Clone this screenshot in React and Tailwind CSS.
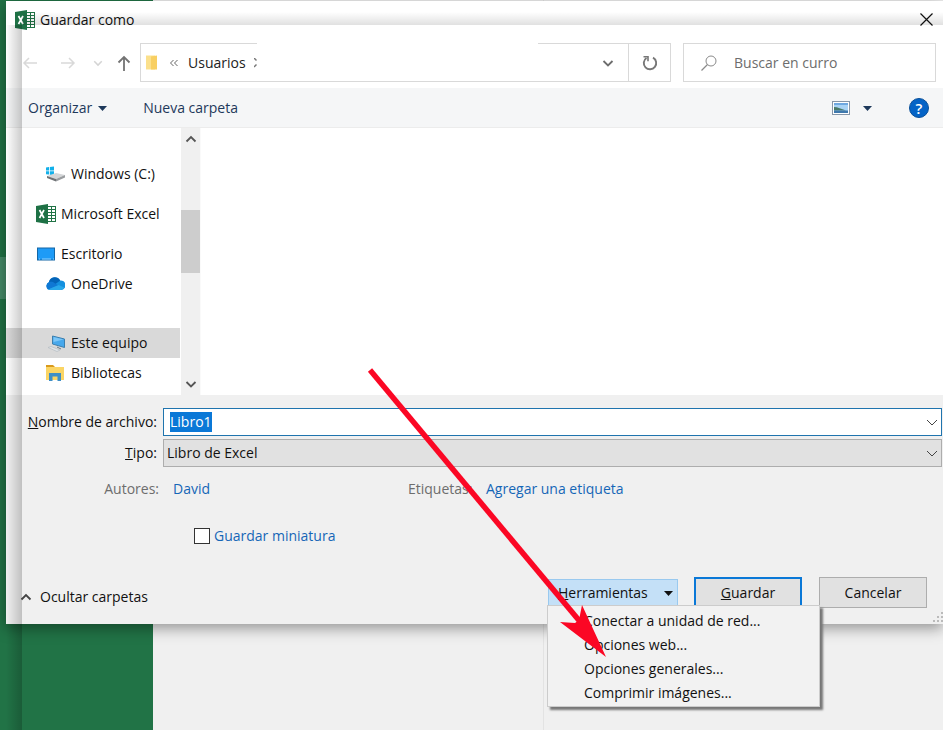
import React, { useEffect, useRef, useState } from "react";

const ExcelIcon = () => (
  <svg width="20" height="20" viewBox="0 0 20 20" className="shrink-0">
    <rect x="10" y="2.5" width="9.5" height="15" fill="#fff" stroke="#217346" />
    <path d="M10 5.5h9M10 8.5h9M10 11.5h9M10 14.5h9M15.500 3v14" stroke="#217346" />
    <path d="M0 2l12-2v20L0 18z" fill="#1e7145" />
    <path d="M3.500 6l4.500 8M8 6l-4.500 8" stroke="#fff" strokeWidth="1.700" />
  </svg>
);

const DriveIcon = () => (
  <svg width="20" height="20" viewBox="0 0 20 20" className="shrink-0">
    <path d="M1 3.500l3-.5v3.500H1zM4.800 2.900L9 2.500v4H4.800zM1 7.300h3v3.300l-3-.4zM4.800 7.300H9v4l-4.200-.5z" fill="#12b0ea" />
    <path d="M2 12l9-3 9 2-9 4z" fill="#d3d5d7" />
    <path d="M2 12l9 3v2.500L2 14z" fill="#6f7275" />
    <path d="M11 15l9-4v2.500l-9 4z" fill="#999c9f" />
  </svg>
);

const DesktopIcon = () => (
  <svg width="20" height="20" viewBox="0 0 20 20" className="shrink-0">
    <rect x="1.500" y="4" width="17" height="12" fill="#1e9bf7" stroke="#1467a6" />
    <path d="M3 15h1M6 15h9M17 15h1" stroke="#8fd0ff" />
  </svg>
);

const CloudIcon = () => (
  <svg width="20" height="20" viewBox="0 0 20 20" className="shrink-0">
    <path d="M4.500 16a4.300 4.300 0 0 1-.5-8 6 6 0 0 1 11-1.500 4.800 4.800 0 0 1 1.500 9.500z" fill="#1490df" />
    <path d="M4 8a6 6 0 0 1 11.200-1.500L9 11z" fill="#0364b8" />
    <path d="M4 8.200c2-1 4-.4 5.500.8l4 2.500L3 15.500A4.300 4.300 0 0 1 4 8.200z" fill="#0f78d4" />
    <path d="M3 15.500L13.500 11l6 2.500A4 4 0 0 1 16 16H4.500z" fill="#28a8ea" />
  </svg>
);

const ComputerIcon = () => (
  <svg width="20" height="20" viewBox="0 0 20 20" className="shrink-0">
    <path d="M7.500 3l12 3v8.500l-12-3.500z" fill="#47a8ec" stroke="#3c7fae" />
    <path d="M8.500 4l10 2.500-10 2.500z" fill="#7cc6f7" />
    <path d="M3 14.500l3-1 9 3.500-3 1.500z" fill="#dfe4e8" stroke="#b5bcc2" strokeWidth=".7" />
    <path d="M12 14l4 2" stroke="#6c7b85" />
  </svg>
);

const LibraryIcon = () => (
  <svg width="20" height="20" viewBox="0 0 20 20" className="shrink-0">
    <path d="M1 2h7l2 2h-9z" fill="#d99a1c" />
    <path d="M1 4h18v13H1z" fill="#fbd564" />
    <path d="M4 18v-8h12v8h-3.500v-4.500h-5V18z" fill="#3f8fc6" />
  </svg>
);

const Chevron = ({ up, size = 12, className = "" }) => (
  <svg width={size} height={size} viewBox="0 0 12 12" className={className}>
    <path d={up ? "M1.500 8.500L6 4l4.500 4.500" : "M1.500 4L6 8.500 10.500 4"} fill="none" stroke="currentColor" strokeWidth="1.800" />
  </svg>
);

const Triangle = () => (
  <svg width="9" height="5" viewBox="0 0 9 5">
    <path d="M0 0h9L4.500 5z" fill="currentColor" />
  </svg>
);

const places = [
  { name: "Windows (C:)", icon: <DriveIcon />, style: "mt-[31px] pl-[39px] gap-[6px]" },
  { name: "Microsoft Excel", icon: <ExcelIcon />, style: "mt-2.5 pl-[30px] gap-[5px]" },
  { name: "Escritorio", icon: <DesktopIcon />, style: "mt-2.5 pl-[30px] gap-[5px]" },
  { name: "OneDrive", icon: <CloudIcon />, style: "pl-[39px] gap-[6px]" },
  { name: "Este equipo", icon: <ComputerIcon />, style: "mt-[29px] pl-[39px] gap-[6px] bg-[#d9d9d9]" },
  { name: "Bibliotecas", icon: <LibraryIcon />, style: "pl-[39px] gap-[6px]" },
];

const tools = [
  "Conectar a unidad de red...",
  "Opciones web...",
  "Opciones generales...",
  "Comprimir imágenes...",
];

const Backdrop = () => (
  <div className="absolute inset-0 flex">
    <div className="w-[153px] bg-[#217346]">
      <div className="mt-[257px] h-[42px] w-[6px] bg-[#468b68]"></div>
    </div>
    <div className="flex-1 bg-[#f0f0f0]">
      <div className="ml-[390px] h-full w-px bg-[#e3e3e3]"></div>
    </div>
  </div>
);

const NavBar = () => (
  <div className="flex h-[51px] items-center pr-[7px] pl-[16px]">
    <button aria-label="Atrás" className="w-[16px] text-[#d9d9d9]">
      <svg width="16" height="14" viewBox="0 0 16 14">
        <path d="M15 7H2M7 2L2 7l5 5" fill="none" stroke="currentColor" strokeWidth="1.500" />
      </svg>
    </button>
    <button aria-label="Adelante" className="ml-[22px] w-[17px] text-[#d9d9d9]">
      <svg width="16" height="14" viewBox="0 0 16 14">
        <path d="M1 7h13M9 2l5 5-5 5" fill="none" stroke="currentColor" strokeWidth="1.500" />
      </svg>
    </button>
    <button aria-label="Recientes" className="ml-4 text-[#d4d4d4]">
      <Chevron size={10} />
    </button>
    <button aria-label="Subir" className="ml-[14px] w-[16px] text-[#737373]">
      <svg width="14" height="16" viewBox="0 0 14 16">
        <path d="M7 16V2M1.500 7.500L7 2l5.500 5.500" fill="none" stroke="currentColor" strokeWidth="1.800" />
      </svg>
    </button>
    <div className="relative ml-[7px] flex h-[39px] flex-1 items-center border border-[#d9d9d9]">
      <svg width="12" height="18" viewBox="0 0 12 18" className="ml-[5px]">
        <path d="M0 1.500h9v14H0z" fill="#fbe08c" />
        <path d="M5 2.500l6-1v14H5z" fill="#f8cf62" />
      </svg>
      <svg width="10" height="8" viewBox="0 0 10 8" className="ml-[11px]">
        <path d="M4.500 1l-3 3 3 3M8.500 1l-3 3 3 3" fill="none" stroke="#666" />
      </svg>
      <a href="#usuarios" className="ml-[9px] text-[#222]">Usuarios</a>
      <svg width="3" height="10" viewBox="0 0 3 10" className="ml-[8px]">
        <path d="M0 0l2.500 2.500M0 9l2.500-2.500" stroke="#777" strokeWidth="1.500" />
      </svg>
      <span className="absolute -top-px left-[116px] h-px w-[281px] bg-white"></span>
      <button aria-label="Ubicaciones anteriores" className="mr-[14px] ml-auto text-[#6d6d6d]">
        <Chevron />
      </button>
      <button aria-label="Actualizar" className="flex h-full w-[42px] items-center justify-center border-l border-[#d9d9d9] text-[#777]">
        <svg width="16" height="16" viewBox="0 0 16 16">
          <path d="M11 2.700A6.200 6.200 0 1 1 4.500 3" fill="none" stroke="currentColor" strokeWidth="1.900" />
          <path d="M1.500 1.800h4.500v4.500" fill="none" stroke="currentColor" strokeWidth="1.600" />
        </svg>
      </button>
    </div>
    <label className="ml-3 flex h-[39px] w-[253px] items-center border border-[#d9d9d9]">
      <svg width="16" height="16" viewBox="0 0 16 16" className="ml-[17px]">
        <circle cx="10" cy="6" r="5" fill="none" stroke="#8a8a8a" />
        <path d="M6.500 9.500L.5 15.500" stroke="#8a8a8a" strokeWidth="1.200" />
      </svg>
      <input
        type="search"
        aria-label="Buscar"
        placeholder="Buscar en curro"
        className="ml-[17px] min-w-0 flex-1 outline-none placeholder:text-[#6d6d6d]"
      />
    </label>
  </div>
);

const Toolbar = () => (
  <div className="flex h-[40px] items-center border-b border-[#ececec] bg-[#f5f6f7] pt-px pr-[14px] pl-[22px] text-[#1e395b]">
    <button className="flex items-center gap-[6px]">
      Organizar <Triangle />
    </button>
    <button className="ml-[36px]">Nueva carpeta</button>
    <button aria-label="Cambiar la vista" className="ml-auto">
      <svg width="18" height="14" viewBox="0 0 18 14">
        <rect x=".5" y=".5" width="17" height="13" fill="#fff" stroke="#8796a8" />
        <path d="M2 2h14v10H2z" fill="#a9d3f5" />
        <path d="M2 2h14v2H2z" fill="#6fa8e0" />
        <path d="M2 6c4 0 7 2 12 3.500H2z" fill="#4a7a68" />
        <path d="M2 9.500h14V12H2z" fill="#3f78ad" />
      </svg>
    </button>
    <button aria-label="Más opciones" className="ml-[13px]">
      <Triangle />
    </button>
    <button aria-label="Ayuda" className="ml-[37px] flex size-5 items-center justify-center rounded-full border border-[#084f9a] bg-[#0463c6] text-[15px] font-semibold text-white">
      ?
    </button>
  </div>
);

const Sidebar = () => (
  <div className="flex">
    <ul className="w-[174px]">
      {places.map((place) => (
        <li key={place.name} className={`flex h-[30px] items-center ${place.style}`}>
          {place.icon}
          <a href="#lugar" className="whitespace-nowrap">{place.name}</a>
        </li>
      ))}
    </ul>
    <div className="ml-px flex w-[20px] flex-col items-center border-r border-[#fafafa] bg-[#f0f0f0] py-[5px] text-[#555]">
      <button aria-label="Desplazar arriba">
        <Chevron up className="block" />
      </button>
      <div className="mt-[65px] h-[63px] w-full bg-[#cdcdcd]"></div>
      <button aria-label="Desplazar abajo" className="mt-auto">
        <Chevron className="block" />
      </button>
    </div>
  </div>
);

const ToolsMenu = () => (
  <div className="relative mt-[2px]">
    <button className="flex h-[27px] w-[130px] items-center justify-between border border-[#99c9ef] bg-[#c4e0f7] pt-px pr-[4px] pl-[9px]">
      <span><u>H</u>erramientas</span>
      <Triangle />
    </button>
    <ul className="absolute top-[26px] -left-px z-10 w-[273px] border border-[#ccc] bg-[#f2f2f2] pt-[3px] pb-px shadow-[3px_3px_2px_#777]">
      {tools.map((tool) => (
        <li key={tool}>
          <button className="block h-6 w-full pl-[36px] text-left leading-6">{tool}</button>
        </li>
      ))}
    </ul>
  </div>
);

const FileForm = () => {
  const [name, setName] = useState("Libro1");
  const nameRef = useRef(null);

  useEffect(() => {
    nameRef.current.focus();
    nameRef.current.select();
  }, []);

  return (
    <div className="flex flex-1 flex-col bg-[#f0f0f0] pt-[13px]">
      <div className="grid grid-cols-[151px_1fr] items-center gap-x-[6px] gap-y-[3px] pr-px">
        <label htmlFor="filename" className="text-right whitespace-nowrap"><u>N</u>ombre de archivo:</label>
        <div className="flex h-[28px] items-center border border-[#1f74ae] bg-white pr-[3px] pl-[6px]">
          <input
            id="filename"
            ref={nameRef}
            value={name}
            onChange={(e) => setName(e.target.value)}
            className="h-5 min-w-0 flex-1 leading-5 outline-none selection:bg-[#0a78d7] selection:text-white"
          />
          <button aria-label="Nombres anteriores" className="text-[#444]">
            <svg width="12" height="12" viewBox="0 0 12 12">
              <path d="M1 4l5 5 5-5" fill="none" stroke="currentColor" />
            </svg>
          </button>
        </div>
        <label htmlFor="filetype" className="text-right"><u>T</u>ipo:</label>
        <div className="relative">
          <select id="filetype" className="block h-[28px] w-full appearance-none border border-[#adadad] bg-[#e1e1e1] pl-[3px] outline-none">
            <option>Libro de Excel</option>
          </select>
          <svg width="12" height="12" viewBox="0 0 12 12" className="pointer-events-none absolute top-2 right-1 text-[#444]">
            <path d="M1 4l5 5 5-5" fill="none" stroke="currentColor" />
          </svg>
        </div>
      </div>
      <div className="mt-[12px] flex text-[#6d6d6d]">
        <span className="w-[153px] text-right">Autores:</span>
        <a href="#autor" className="ml-[14px] w-[221px] text-[#1566b7]">David</a>
        <span className="ml-[14px] w-[64px]">Etiquetas:</span>
        <a href="#etiqueta" className="ml-[14px] text-[#1566b7]">Agregar una etiqueta</a>
      </div>
      <label className="mt-[27px] ml-[188px] flex items-center gap-1 self-start text-[#1566b7]">
        <input type="checkbox" className="size-4 appearance-none border border-[#333] bg-white checked:bg-[#0a78d7]" />
        Guardar miniatura
      </label>
      <div className="mt-auto flex items-start pr-4 pb-4">
        <button className="mt-[10px] mr-auto ml-[14px] flex items-center gap-2">
          <Chevron up className="text-[#444]" /> Ocultar carpetas
        </button>
        <ToolsMenu />
        <button className="ml-4 h-[31px] w-[108px] border-2 border-[#0a78d7] bg-[#e1e1e1]"><u>G</u>uardar</button>
        <button className="ml-[17px] h-[31px] w-[108px] border border-[#adadad] bg-[#e1e1e1]">Cancelar</button>
      </div>
      <svg width="10" height="10" viewBox="0 0 10 10" className="absolute right-0 bottom-[2px]" fill="#bbb">
        <path d="M8 0h2v2H8zM4 4h2v2H4zM8 4h2v2H8zM0 8h2v2H0zM4 8h2v2H4zM8 8h2v2H8z" />
      </svg>
    </div>
  );
};

const App = () => {
  return (
    <div className="relative min-h-screen overflow-hidden pt-px pl-[6px] font-['Open_Sans','Noto_Sans',sans-serif] text-[14px] leading-5 text-[#111]">
      <Backdrop />
      <main className="relative flex min-h-[623px] flex-col bg-white shadow-[0_4px_14px_rgba(0,0,0,0.4)]">
        <header className="flex h-[36px] items-center gap-[5px] pt-px pr-[10px] pl-[9px]">
          <ExcelIcon />
          <h1>Guardar como</h1>
          <button aria-label="Cerrar" className="ml-auto">
            <svg width="13" height="13" viewBox="0 0 13 13">
              <path d="M.5.5l12 12M12.500.5l-12 12" stroke="#111" strokeWidth="1.200" />
            </svg>
          </button>
        </header>
        <NavBar />
        <Toolbar />
        <div className="flex h-[267px]">
          <Sidebar />
          <div className="flex-1 bg-white"></div>
        </div>
        <FileForm />
      </main>

      {/* shadow edges of the window behind */}
      <div className="pointer-events-none absolute top-[12px] right-0 left-[22px] h-[13px] bg-linear-to-b from-transparent to-black/12"></div>
      <div className="pointer-events-none absolute top-[25px] bottom-0 left-[6px] w-[16px] bg-linear-to-r from-transparent to-black/20"></div>

      <svg width="250" height="300" viewBox="0 0 250 300" className="pointer-events-none absolute top-[360px] left-[360px] z-20">
        <path d="M10 10L222 264" stroke="#fb0724" strokeWidth="5.500" />
        <path d="M246 297L222 245l-3 15-4 3-15-1z" fill="#fb0724" />
      </svg>
    </div>
  );
};

export default App;
